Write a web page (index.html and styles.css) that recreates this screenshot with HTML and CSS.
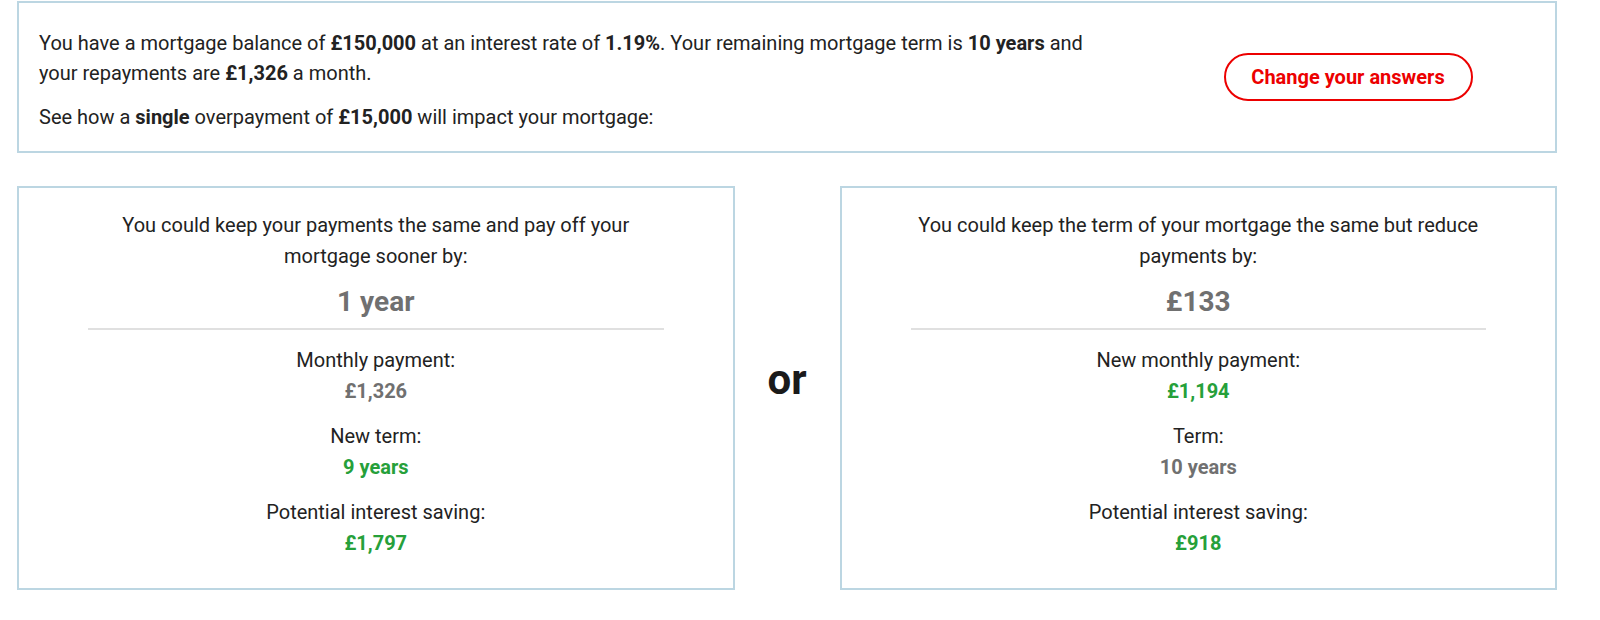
FILE: index.html
```html
<!DOCTYPE html>
<html lang="en">

<head>
    <meta charset="UTF-8">
    <meta name="viewport" content="width=device-width, initial-scale=1.0">
    <title>Overpayment calculator</title>
    <link rel="stylesheet" href="styles.css">
</head>

<body>
    <div class="page">
        <!-- summary of the answers -->
        <div class="summary">
            <div class="summary-text">
                <p>You have a mortgage balance of <b>£150,000</b> at an interest rate of <b>1.19%</b>. Your remaining mortgage term is <b>10 years</b> and<br>your repayments are <b>£1,326</b> a month.</p>
                <p>See how a <b>single</b> overpayment of <b>£15,000</b> will impact your mortgage:</p>
            </div>
            <div class="summary-action">
                <a class="btn-change" href="#">Change your answers</a>
            </div>
        </div>

        <!-- the two options -->
        <div class="options">
            <div class="card">
                <p class="card-title">You could keep your payments the same and pay off your<br>mortgage sooner by:</p>
                <div class="card-big">1 year</div>
                <div class="card-line"></div>
                <div class="stat">
                    <div class="stat-label">Monthly payment:</div>
                    <div class="stat-value">£1,326</div>
                </div>
                <div class="stat">
                    <div class="stat-label">New term:</div>
                    <div class="stat-value good">9 years</div>
                </div>
                <div class="stat">
                    <div class="stat-label">Potential interest saving:</div>
                    <div class="stat-value good">£1,797</div>
                </div>
            </div>

            <div class="or">or</div>

            <div class="card">
                <p class="card-title">You could keep the term of your mortgage the same but reduce<br>payments by:</p>
                <div class="card-big">£133</div>
                <div class="card-line"></div>
                <div class="stat">
                    <div class="stat-label">New monthly payment:</div>
                    <div class="stat-value good">£1,194</div>
                </div>
                <div class="stat">
                    <div class="stat-label">Term:</div>
                    <div class="stat-value">10 years</div>
                </div>
                <div class="stat">
                    <div class="stat-label">Potential interest saving:</div>
                    <div class="stat-value good">£918</div>
                </div>
            </div>
        </div>
    </div>
</body>

</html>
```

FILE: styles.css
```css
* {
    padding: 0;
    margin: 0;
    box-sizing: border-box;
}

body {
    font-family: Roboto, "Liberation Sans", sans-serif;
    font-size: 20px;
    color: #222;
    background: #fff;
}

.page {
    width: 1557px;
    padding: 1px 0 0 17px;
}

/* top box */
.summary {
    display: grid;
    grid-template-columns: 3fr 1fr;
    align-items: start;
    border: 2px solid #bcd6e2;
    padding: 25px 20px 19px 20px;
}

.summary-text p {
    line-height: 30px;
}

.summary-text p + p {
    margin-top: 14px;
}

.summary-text b {
    font-weight: 700;
}

.summary-action {
    display: flex;
    justify-content: center;
    padding-top: 25px;
}

.btn-change {
    display: block;
    width: 249px;
    height: 48px;
    line-height: 44px;
    text-align: center;
    border: 2px solid #ec0000;
    border-radius: 24px;
    color: #ec0000;
    font-weight: 700;
    font-size: 20px;
    text-decoration: none;
}

/* option cards */
.options {
    display: grid;
    grid-template-columns: 1fr 105px 1fr;
    align-items: stretch;
    margin-top: 33px;
}

.card {
    border: 2px solid #bcd6e2;
    padding: 22px 60px 33px;
    text-align: center;
    height: 404px;
}

.card-title {
    line-height: 31px;
}

.card-big {
    margin-top: 12px;
    font-size: 28px;
    line-height: 36px;
    font-weight: 700;
    color: #707070;
}

.card-line {
    height: 2px;
    background: #e0e0e0;
    margin: 8px 9px 15px;
}

.stat + .stat {
    margin-top: 14px;
}

.stat-label,
.stat-value {
    line-height: 31px;
}

.stat-value {
    font-weight: 700;
    color: #707070;
}

.stat-value.good {
    color: #26a03a;
}

.or {
    align-self: center;
    padding-bottom: 18px;
    text-align: center;
    font-size: 42px;
    font-weight: 700;
    color: #1a1a1a;
}
```
